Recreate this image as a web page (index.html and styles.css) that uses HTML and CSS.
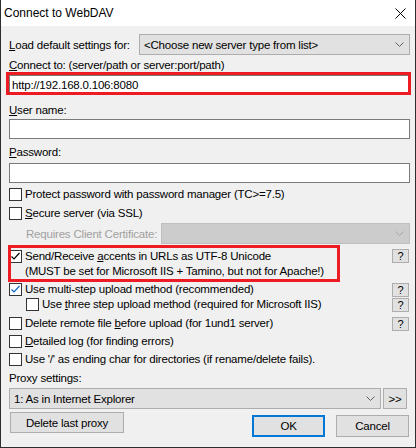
FILE: index.html
```html
<!DOCTYPE html>
<html>
<head>
<meta charset="utf-8">
<link rel="stylesheet" href="styles.css">
</head>
<body>
<div class="window">
  <div class="titlebar">
    <span class="title">Connect to WebDAV</span>
    <svg class="close" width="11" height="11" viewBox="0 0 11 11"><path d="M0.5 0.5 L10.5 10.5 M10.5 0.5 L0.5 10.5" stroke="#000" stroke-width="1" fill="none"/></svg>
  </div>
  <div class="content">
    <div class="row-load">
      <span class="text"><u>L</u>oad default settings for:</span>
      <div class="select sel-load"><span>&lt;Choose new server type from list&gt;</span><svg class="chev" width="9" height="5" viewBox="0 0 9 5"><path d="M0.5 0.5 L4.5 4.5 L8.5 0.5" stroke="#606060" fill="none"/></svg></div>
    </div>
    <div class="label l-connect"><u>C</u>onnect to: (server/path or server:port/path)</div>
    <div class="input i-url">http://192.168.0.106:8080</div>
    <div class="label l-user"><u>U</u>ser name:</div>
    <div class="input i-user"></div>
    <div class="label l-pass"><u>P</u>assword:</div>
    <div class="input i-pass"></div>

    <div class="cb-row r-protect"><span class="cb"></span><span class="text">Protect password with password manager (TC&gt;=7.5)</span></div>
    <div class="cb-row r-secure"><span class="cb"></span><span class="text"><u>S</u>ecure server (via SSL)</span></div>
    <div class="row-cert">
      <span class="text disabled">Requires Client Certificate:</span>
      <div class="select sel-cert"><svg class="chev" width="9" height="5" viewBox="0 0 9 5"><path d="M0.5 0.5 L4.5 4.5 L8.5 0.5" stroke="#a8a8a8" fill="none"/></svg></div>
    </div>
    <div class="cb-row r-utf">
      <div class="cb-main">
        <span class="cb"><svg width="13" height="13" viewBox="0 0 13 13"><path d="M2.5 6.5 L5 9 L10.5 3" stroke="#000" stroke-width="1.2" fill="none"/></svg></span>
        <span class="text">Send/Receive <u>a</u>ccents in URLs as UTF-8 Unicode<br>(MUST be set for Microsoft IIS + Tamino, but not for Apache!)</span>
      </div>
      <span class="help">?</span>
    </div>
    <div class="cb-row r-multi">
      <div class="cb-main">
        <span class="cb"><svg width="13" height="13" viewBox="0 0 13 13"><path d="M2.5 6.5 L5 9 L10.5 3" stroke="#0a64c8" stroke-width="1.2" fill="none"/></svg></span>
        <span class="text">Use multi-step upload method (recommended)</span>
      </div>
      <span class="help">?</span>
    </div>
    <div class="cb-row r-three">
      <div class="cb-main indent">
        <span class="cb"></span>
        <span class="text">Use <u>t</u>hree step upload method (required for Microsoft IIS)</span>
      </div>
      <span class="help">?</span>
    </div>
    <div class="cb-row r-delete">
      <div class="cb-main">
        <span class="cb"></span>
        <span class="text">Delete remote file <u>b</u>efore upload (for 1und1 server)</span>
      </div>
      <span class="help">?</span>
    </div>
    <div class="cb-row r-log"><span class="cb"></span><span class="text"><u>D</u>etailed log (for finding errors)</span></div>
    <div class="cb-row r-slash"><span class="cb"></span><span class="text">Use '/' as ending char for directories (if rename/delete fails).</span></div>

    <div class="label l-proxy">Proxy settings:</div>
    <div class="row-proxy">
      <div class="select sel-proxy"><span>1: As in Internet Explorer</span><svg class="chev" width="9" height="5" viewBox="0 0 9 5"><path d="M0.5 0.5 L4.5 4.5 L8.5 0.5" stroke="#606060" fill="none"/></svg></div>
      <span class="btn btn-more">&gt;&gt;</span>
    </div>
    <div class="row-buttons">
      <span class="btn btn-delproxy">Delete last proxy</span>
      <div class="btn-group">
        <span class="btn btn-ok">OK</span>
        <span class="btn btn-cancel">Cancel</span>
      </div>
    </div>
  </div>
  <div class="mark mark-url"></div>
  <div class="mark mark-utf"></div>
</div>
</body>
</html>
```

FILE: styles.css
```css
* { box-sizing: border-box; }
html, body { margin: 0; padding: 0; }
body {
  font-family: "Liberation Sans", Arial, sans-serif;
  font-size: 11.5px;
  letter-spacing: -0.2px;
  color: #000;
  background: #f0f0f0;
}
u { text-decoration: underline; text-underline-offset: 1px; }

.window {
  position: relative;
  width: 416px;
  height: 448px;
  background: #f0f0f0;
  border: 1px solid #2e2e2e;
  border-top: none;
}

.titlebar {
  height: 26px;
  background: #fff;
  display: flex;
  align-items: center;
  justify-content: space-between;
  padding-left: 3px;
  padding-right: 9px;
}
.title { font-size: 12px; letter-spacing: 0; }
.close { display: block; }

.content {
  padding: 8px 5px 0 8px;
  display: flex;
  flex-direction: column;
}

.text { white-space: nowrap; }
.disabled { color: #a0a0a0; }

.row-load {
  height: 21px;
  display: flex;
  align-items: center;
  justify-content: space-between;
}

.select {
  height: 21px;
  background: #e1e1e1;
  border: 1px solid #adadad;
  display: flex;
  align-items: center;
  justify-content: space-between;
  padding-left: 4px;
  padding-right: 5px;
}
.chev { display: block; flex: none; margin-left: auto; }
.sel-load { width: 271px; }
.sel-cert { width: 249px; background: #cccccc; border-color: #bfbfbf; }

.label { height: 16px; line-height: 16px; }
.l-connect { margin-top: 2px; }
.l-user { margin-top: 7px; }
.l-pass { margin-top: 5px; }
.l-proxy { margin-top: 3px; }

.input {
  height: 20px;
  background: #fff;
  border: 1px solid #7a7a7a;
  line-height: 18px;
  padding-left: 2px;
}
.i-url { margin-top: 2px; }
.i-user { margin-top: 1px; }
.i-pass { margin-top: 3px; }

.cb-row {
  display: flex;
  align-items: center;
  justify-content: space-between;
  min-height: 15px;
  line-height: 15px;
}
.cb-row > .cb { margin-right: 3px; }
.cb-row:not(:has(.cb-main)) { justify-content: flex-start; }
.cb-main { display: flex; align-items: center; }
.cb-main .cb { margin-right: 3px; }
.r-utf .cb-main { align-items: flex-start; }
.r-utf .cb-main .cb { margin-top: 1px; }
.r-utf .help { align-self: flex-start; margin-top: 0; }
.indent { padding-left: 17px; }

.cb {
  width: 13px;
  height: 13px;
  flex: none;
  background: #fff;
  border: 1px solid #333;
  position: relative;
}
.cb svg { position: absolute; left: -1px; top: -1px; display: block; }

.r-protect { margin-top: 4px; }
.r-secure { margin-top: 4px; }
.row-cert {
  margin-top: 2px;
  height: 21px;
  display: flex;
  align-items: center;
  justify-content: space-between;
  padding-left: 17px;
}
.r-utf { margin-top: 5px; }
.r-multi { margin-top: 3px; }
.r-three { margin-top: 0; }
.r-delete { margin-top: 4px; }
.r-log { margin-top: 3px; }
.r-slash { margin-top: 3px; }

.help {
  width: 17px;
  height: 14px;
  flex: none;
  background: #e1e1e1;
  border: 1px solid #adadad;
  font-size: 11px;
  line-height: 12px;
  letter-spacing: 0;
  text-align: center;
  margin-right: 1px;
}

.row-proxy {
  margin-top: 2px;
  display: flex;
  align-items: center;
}
.sel-proxy { width: 372px; }
.btn {
  background: #e1e1e1;
  border: 1px solid #adadad;
  display: flex;
  align-items: center;
  justify-content: center;
}
.btn-more { width: 24px; height: 21px; margin-left: 2px; }

.row-buttons {
  margin-top: 3px;
  display: flex;
  justify-content: space-between;
  align-items: flex-start;
}
.btn-delproxy { width: 114px; height: 21px; margin-left: 1px; }
.btn-group { display: flex; gap: 11px; margin-top: 3px; margin-right: 1px; }
.btn-ok { width: 73px; height: 22px; border: 2px solid #0078d7; }
.btn-cancel { width: 73px; height: 22px; }

.mark {
  position: absolute;
  border: 3px solid #ed1c24;
  pointer-events: none;
}
.mark-url { left: 5px; top: 72px; width: 405px; height: 23px; }
.mark-utf { left: 7px; top: 245px; width: 332px; height: 37px; }
```
